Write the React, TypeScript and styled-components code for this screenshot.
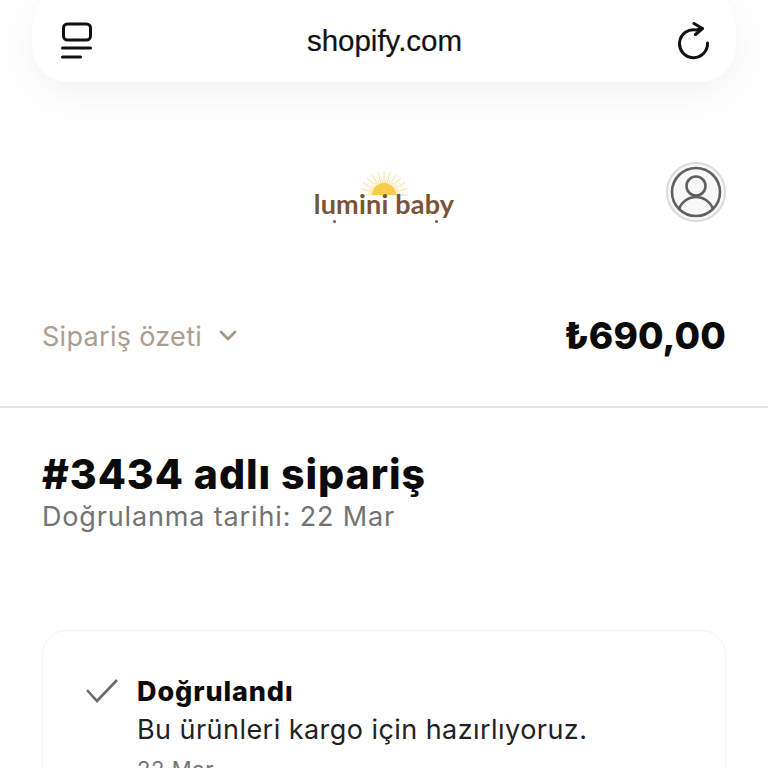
import React from "react";
import styled, { createGlobalStyle } from "styled-components";

const Global = createGlobalStyle`
  html, body { margin: 0; padding: 0; background: #fff; overflow: hidden; }
  #root { height: 768px; overflow: hidden; }
`;

const Page = styled.div`
  width: 768px;
  height: 768px;
  overflow: hidden;
  display: flex;
  flex-direction: column;
  background: #fff;
  font-family: Inter, "Liberation Sans", sans-serif;
`;

const BrowserBar = styled.div`
  flex: none;
  height: 82px;
  margin: -10px 32px 0;
  padding: 10px 27px 0 28px;
  display: flex;
  align-items: center;
  justify-content: space-between;
  background: #fff;
  border-radius: 36px;
  box-shadow: 0 12px 40px rgba(0, 0, 0, 0.055);
`;

const Address = styled.span`
  font-family: "Liberation Sans", Arial, sans-serif;
  font-size: 29.5px;
  color: #111;
  -webkit-text-stroke: 0.2px #111;
`;

const BrandRow = styled.div`
  flex: none;
  height: 60px;
  margin: 80px 42px 0;
  display: flex;
  align-items: center;
  justify-content: center;
  position: relative;
`;

const Logo = styled.div`
  display: flex;
  flex-direction: column;
  align-items: center;
  position: relative;
  top: 2px;
`;

const LogoSun = styled.svg`
  display: block;
  margin-bottom: -8px;
`;

const LogoText = styled.span`
  font-family: Lato, "Open Sans", sans-serif;
  font-weight: 700;
  font-size: 27px;
  line-height: 32px;
  letter-spacing: 0.2px;
  color: #7a5338;
`;

const LogoDot = styled.i<{ $left: number }>`
  position: absolute;
  bottom: -3px;
  left: ${(p) => p.$left}px;
  width: 3px;
  height: 3px;
  border-radius: 50%;
  background: #7a5338;
`;

const Avatar = styled.div`
  position: absolute;
  right: 0;
  top: 0;
  width: 56px;
  height: 56px;
  border: 2px solid #dadada;
  border-radius: 50%;
  display: flex;
  align-items: center;
  justify-content: center;
  background: #f8f8f8;
`;

const SummaryRow = styled.div`
  flex: none;
  height: 70px;
  margin-top: 80px;
  padding: 0 42px;
  display: flex;
  align-items: center;
  justify-content: space-between;
`;

const SummaryToggle = styled.div`
  display: flex;
  align-items: center;
  gap: 16px;
  color: #aa9e8f;
  font-size: 27px;
  letter-spacing: 0.3px;
  position: relative;
  top: -1px;
`;

const Total = styled.span`
  font-size: 37px;
  font-weight: 800;
  letter-spacing: 0.1px;
  color: #0b0b0b;
  position: relative;
  top: -2px;
`;

const Divider = styled.div`
  flex: none;
  height: 2px;
  margin-top: 34px;
  background: #e3e3e3;
`;

const Heading = styled.div`
  flex: none;
  padding: 42px 42px 0;
`;

const Title = styled.h1`
  margin: 0;
  font-size: 41px;
  line-height: 48px;
  font-weight: 800;
  letter-spacing: 0.95px;
  color: #0b0b0b;
`;

const Subtitle = styled.p`
  margin: 0;
  font-size: 27px;
  line-height: 38px;
  letter-spacing: 0.85px;
  color: #737373;
`;

const Card = styled.section`
  flex: none;
  margin: 94px 42px 0;
  padding: 42px 38px 0 43px;
  height: 300px;
  box-sizing: border-box;
  border: 1px solid #f3f3f3;
  border-radius: 24px;
  display: flex;
  gap: 19px;
`;

const CheckIcon = styled.svg`
  flex: none;
  margin-top: 6px;
`;

const Status = styled.div`
  display: flex;
  flex-direction: column;
`;

const StatusTitle = styled.strong`
  font-size: 27px;
  line-height: 38px;
  font-weight: 800;
  letter-spacing: 0.9px;
  color: #0b0b0b;
`;

const StatusText = styled.span`
  font-size: 27px;
  line-height: 38px;
  letter-spacing: 0.45px;
  color: #222;
`;

const StatusDate = styled.span`
  font-size: 22px;
  line-height: 40px;
  letter-spacing: 0.6px;
  color: #737373;
`;

export default function App() {
  const rays = Array.from({ length: 25 }, (_, i) => (Math.PI * i) / 24);
  return (
    <Page>
      <Global />
      <BrowserBar>
        <svg width="32" height="38" viewBox="0 0 32 38" fill="none" stroke="#111" strokeWidth="3" strokeLinecap="round">
          <rect x="3.5" y="2" width="27" height="16" rx="4" />
          <path d="M2.5 26h28M2.5 35h18" />
        </svg>
        <Address>shopify.com</Address>
        <svg width="32" height="38" viewBox="-2.5 0 32 38" fill="none" stroke="#111" strokeWidth="3" strokeLinecap="round" strokeLinejoin="round">
          <path d="M22.5 6.5L17 8A14 14 0 1 0 28 21" />
          <path d="M14.5 1.5L23 6.5L16 12.5" />
        </svg>
      </BrowserBar>

      <BrandRow>
        <Logo>
          <LogoSun width="48" height="28" viewBox="0 0 48 28">
            {rays.map((a, i) => (
              <line
                key={i}
                x1={24 + Math.cos(a) * 8}
                y1={27 - Math.sin(a) * 8}
                x2={24 + Math.cos(a) * (i % 2 ? 16 : 24)}
                y2={27 - Math.sin(a) * (i % 2 ? 16 : 24)}
                stroke="#f9e29a"
                strokeWidth="1"
              />
            ))}
            <path d="M12 27a12 12 0 0 1 24 0z" fill="#f7cd4a" />
          </LogoSun>
          <LogoText>lumini baby</LogoText>
          <LogoDot $left={19} />
          <LogoDot $left={121} />
        </Logo>
        <Avatar>
          <svg width="52" height="52" viewBox="0 0 52 52" fill="none" stroke="#606060" strokeWidth="2.6">
            <circle cx="26" cy="26" r="24" />
            <circle cx="26" cy="20" r="9.5" />
            <path d="M9 43c3-8 10-12 17-12s14 4 17 12" />
          </svg>
        </Avatar>
      </BrandRow>

      <SummaryRow>
        <SummaryToggle>
          Sipariş özeti
          <svg width="20" height="14" viewBox="0 0 20 14" fill="none" stroke="#a3988a" strokeWidth="2.8" strokeLinecap="round" strokeLinejoin="round">
            <path d="M3 3l7 7 7-7" />
          </svg>
        </SummaryToggle>
        <Total>₺690,00</Total>
      </SummaryRow>
      <Divider />

      <Heading>
        <Title>#3434 adlı sipariş</Title>
        <Subtitle>Doğrulanma tarihi: 22 Mar</Subtitle>
      </Heading>

      <Card>
        <CheckIcon width="32" height="24" viewBox="0 0 32 24" fill="none" stroke="#6b6b6b" strokeWidth="2.6">
          <path d="M1 11l10 11L31 1" />
        </CheckIcon>
        <Status>
          <StatusTitle>Doğrulandı</StatusTitle>
          <StatusText>Bu ürünleri kargo için hazırlıyoruz.</StatusText>
          <StatusDate>22 Mar</StatusDate>
        </Status>
      </Card>
    </Page>
  );
}
